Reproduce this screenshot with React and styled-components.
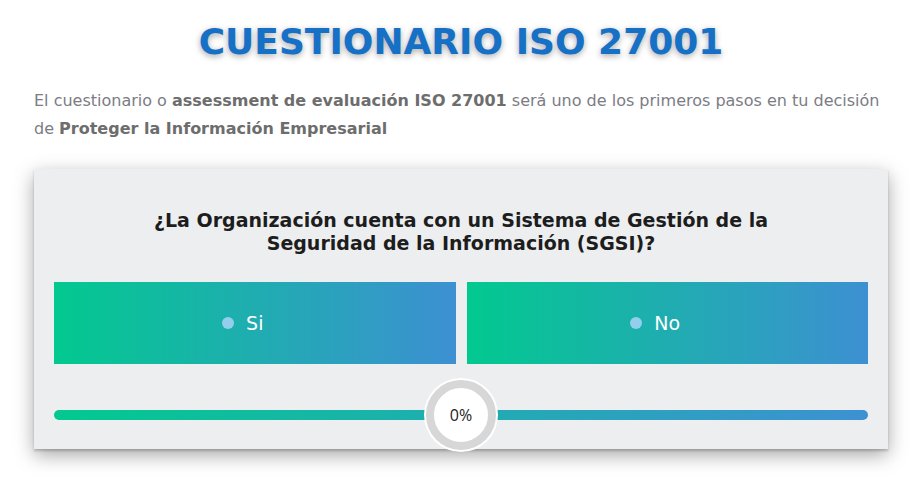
import styled, { createGlobalStyle } from "styled-components";

const GlobalStyle = createGlobalStyle`
  html, body {
    margin: 0;
    padding: 0;
    background: #ffffff;
  }
  body {
    font-family: "DejaVu Sans", Verdana, sans-serif;
  }
`;

const Page = styled.div`
  padding: 0 34px 40px;
`;

const Title = styled.h1`
  margin: 20px 0 0;
  text-align: center;
  font-family: "DejaVu Sans", Verdana, sans-serif;
  font-weight: bold;
  font-size: 36px;
  line-height: 44px;
  color: #1570c6;
  text-shadow: 0 2px 6px rgba(0, 0, 0, 0.35);
`;

const Intro = styled.p`
  margin: 23px 0 0;
  font-size: 16px;
  line-height: 28px;
  color: #7c7c84;

  strong {
    color: #6d6d6d;
  }
`;

const Card = styled.section`
  margin-top: 26px;
  background: #eceef0;
  padding: 40px 20px 0;
  height: 240px;
  box-shadow: 0 2px 2px rgba(0, 0, 0, 0.18), 0 6px 18px rgba(0, 0, 0, 0.35);
`;

const Question = styled.h2`
  margin: 0 auto;
  max-width: 640px;
  text-align: center;
  font-size: 19px;
  line-height: 23px;
  font-weight: bold;
  color: #1d1d1d;
`;

const Options = styled.div`
  margin-top: 27px;
  display: grid;
  grid-template-columns: 1fr 1fr;
  gap: 11px;
`;

const Option = styled.label`
  height: 82px;
  box-sizing: border-box;
  padding-right: 24px;
  display: flex;
  align-items: center;
  justify-content: center;
  gap: 12px;
  background: linear-gradient(90deg, #02c98f 0%, #3d90d2 100%);
  color: #ffffff;
  font-size: 19px;
  cursor: pointer;
`;

const Dot = styled.span`
  width: 12px;
  height: 12px;
  border-radius: 50%;
  background: #93cfec;
`;

const Progress = styled.div`
  position: relative;
  margin-top: 46px;
  height: 10px;
  border-radius: 5px;
  background: linear-gradient(90deg, #02c98f 0%, #3d91d2 100%);
`;

const Badge = styled.div`
  position: absolute;
  left: 50%;
  top: 50%;
  transform: translate(-50%, -50%);
  width: 54px;
  height: 54px;
  border-radius: 50%;
  background: #ffffff;
  border: 8px solid #d7d7d7;
  box-shadow: 0 0 0 2px #ffffff;
  display: flex;
  align-items: center;
  justify-content: center;
  font-family: "Open Sans", sans-serif;
  font-size: 16px;
  color: #222222;
`;

export default function App() {
  return (
    <>
      <GlobalStyle />
      <Page>
        <Title>CUESTIONARIO ISO 27001</Title>
        <Intro>
          El cuestionario o <strong>assessment de evaluación ISO 27001</strong>{" "}
          será uno de los primeros pasos en tu decisión de{" "}
          <strong>Proteger la Información Empresarial</strong>
        </Intro>
        <Card>
          <Question>
            ¿La Organización cuenta con un Sistema de Gestión de la Seguridad de
            la Información (SGSI)?
          </Question>
          <Options>
            <Option>
              <Dot />
              Si
            </Option>
            <Option>
              <Dot />
              No
            </Option>
          </Options>
          <Progress>
            <Badge>0%</Badge>
          </Progress>
        </Card>
      </Page>
    </>
  );
}
